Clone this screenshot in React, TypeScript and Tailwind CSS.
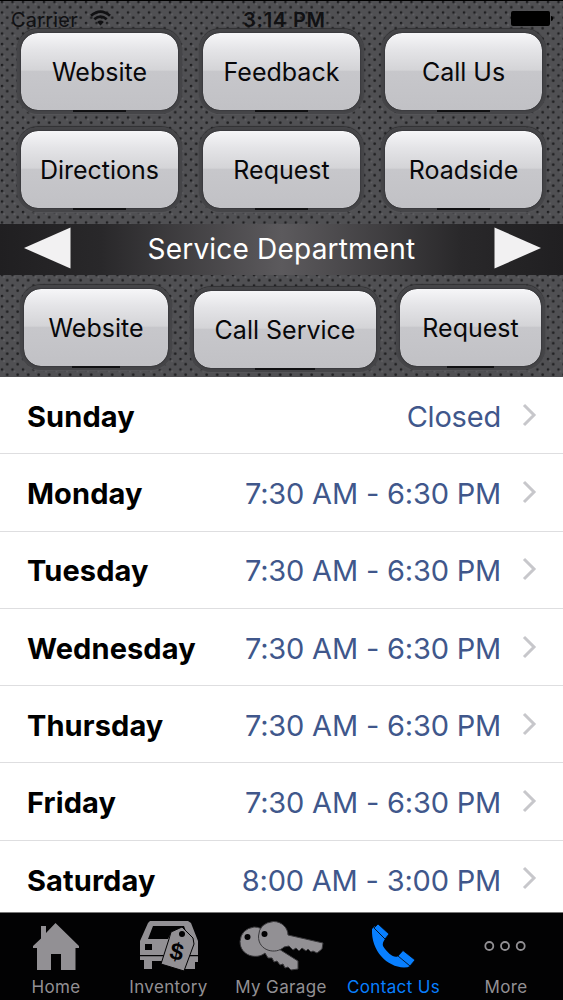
import type { ReactNode } from 'react'
import { clsx } from 'clsx'

type Hours = { day: string; time: string }

const hours: Hours[] = [
  { day: 'Sunday', time: 'Closed' },
  { day: 'Monday', time: '7:30 AM - 6:30 PM' },
  { day: 'Tuesday', time: '7:30 AM - 6:30 PM' },
  { day: 'Wednesday', time: '7:30 AM - 6:30 PM' },
  { day: 'Thursday', time: '7:30 AM - 6:30 PM' },
  { day: 'Friday', time: '7:30 AM - 6:30 PM' },
  { day: 'Saturday', time: '8:00 AM - 3:00 PM' },
]

// Glossy button set into the metal plate
function MetalButton({ label, className }: { label: string; className?: string }) {
  return (
    <button
      className={clsx(
        'relative flex h-[85px] items-center justify-center rounded-[21px] border-4 border-[#454548] bg-[linear-gradient(#f6f6f8_0%,#e4e4e7_22%,#d4d4d7_48%,#c7c7cb_50%,#c1c1c5_100%)] bg-clip-padding pt-0.5 text-[25px] whitespace-nowrap text-[#08080a] shadow-[0_-1px_1px_#303032,0_1px_1px_#565659]',
        className
      )}
    >
      <span className="absolute inset-0 rounded-[17px] shadow-[0_0_2px_#252527]" />
      <span className="absolute -bottom-[2px] left-1/3 h-[2px] w-1/3 bg-[#111113]" />
      <span className="relative">{label}</span>
    </button>
  )
}

function StatusBar() {
  return (
    <div className="relative flex h-[33px] items-start justify-between border-t border-black pt-[7px] pr-2.5 pl-[11px] text-[20px] leading-6 text-[#111113]">
      <div className="flex gap-3">
        <span className="tracking-[0.2px]">Carrier</span>
        <svg width="21" height="16" viewBox="0 0 21 16" className="mt-[2px]" fill="none" stroke="#111113" strokeWidth="2.8">
          <path d="M1 5.8Q10.500-2.500 20 5.800M4.300 9.300Q10.500 4 16.700 9.300" />
          <path d="M7.200 12Q10.500 9.200 13.800 12L10.500 15.500Z" fill="#111113" stroke="none" />
        </svg>
      </div>
      <span className="absolute left-[243px] font-semibold tracking-[0.8px]">3:14 PM</span>
      <div className="mt-[3px] flex items-center gap-px">
        <span className="h-[15px] w-[39px] rounded-[2px] bg-black" />
        <span className="h-[5px] w-[2px] rounded-r bg-black" />
      </div>
    </div>
  )
}

function DepartmentBar() {
  return (
    <div className="mt-3 flex h-[51px] items-center justify-between bg-[linear-gradient(90deg,#201f21_0%,#29282a_18%,#5c5a5d_50%,#29282a_82%,#201f21_100%)] pr-[21px] pl-[23px]">
      <svg width="48" height="42" viewBox="0 0 48 42" className="-mt-1">
        <path d="M1 21 47.500 .500V41.500Z" fill="#f2f1f2" />
      </svg>
      <span className="-mt-0.5 mr-0.5 text-[28px] tracking-[0.2px] text-white">Service Department</span>
      <svg width="48" height="42" viewBox="0 0 48 42" className="-mt-1">
        <path d="M.500 .500 47 21 .500 41.500Z" fill="#f2f1f2" />
      </svg>
    </div>
  )
}

function HoursRow({ day, time }: Hours) {
  return (
    <div className="flex h-[77.300px] shrink-0 items-center border-b border-[#dedee0] pt-[3px] pr-[26px] pl-[27px]">
      <span className="flex-1 text-[29px] font-[650] tracking-[0.1px] text-black">{day}</span>
      <span className="text-[29px] tracking-[-0.200px] text-[#40578b]">{time}</span>
      <svg width="15" height="24" viewBox="0 0 15 24" className="-mt-1 ml-[21px]" fill="none" stroke="#c7c7cb" strokeWidth="3">
        <path d="m2 2 10 10L2 22" />
      </svg>
    </div>
  )
}

function Tab({ label, active, children }: { label: string; active?: boolean; children: ReactNode }) {
  return (
    <div className={clsx('flex w-[112.500px] shrink-0 flex-col items-center', active ? 'text-[#087fff]' : 'text-[#929094]')}>
      <svg width="90" height="60" viewBox="0 0 90 60" className="mt-1">
        {children}
      </svg>
      <span className="-mt-px mr-px text-[17px] leading-[22px] tracking-[0.35px] whitespace-nowrap">{label}</span>
    </div>
  )
}

function TabBar() {
  return (
    <nav className="flex h-[88px] shrink-0 justify-center overflow-hidden border-t border-[#777] bg-[#020203]">
      <Tab label="Home">
        <path fill="currentColor" d="M21 29 29 21.500V9H34V16L43.500 6 67 29V31H63.500V53H49V37H39V53H25V31H21Z" />
      </Tab>
      <Tab label="Inventory">
        <path fill="currentColor" fillRule="evenodd" d="M26 4H64L67 6 74 24V45H71V52H61V44H28V52H20V43H16V24L24 6ZM29 9 24 22 44 22 48 14 63 17 60 9Z" />
        <path fill="#020203" d="M21 27H28V33H21ZM16 38H74V39.300H16Z" />
        <path fill="currentColor" stroke="#020203" d="M47 15 58 10 69 21 70 27 60 54 37 47 45 22Z" />
        <circle cx="58" cy="17" r="3" fill="#020203" />
        <text x="46" y="43" fill="#020203" className="font-['Liberation_Sans',sans-serif] text-[24px] font-bold" transform="rotate(12 53 35)">$</text>
      </Tab>
      <Tab label="My Garage">
        <g fill="currentColor" stroke="#39383b" strokeWidth="1">
          <path d="M17 10C27 10 33 18 34 27L61 44V52L54 53 51 50 48 51 46 47 43 48 40 44 37 45 35 41 31 41 28 36C20 43 3 39 3 24.500Q4 12 17 10Z" />
          <circle cx="10.500" cy="20" r="3" fill="#020203" stroke="none" />
          <path d="M36.500 4.500C45 4.500 51 11 51 18L86 26 85 32 80 36 76 34 74 35 71 32 69 34 65 31 62 34 59 31 56 33 52 29 47 30C39 38 21 34 21.500 19Q22 6 36.500 4.500Z" />
          <circle cx="27.500" cy="17" r="3" fill="#020203" stroke="none" />
        </g>
      </Tab>
      <Tab label="Contact Us" active>
        <path fill="currentColor" d="M26 9 23 12C22 34 38 50 55 50.500Q59 50.500 61 49L50 38C47 43 39 37 34 29Q33 26 36 22L26 12Z" />
        <path fill="currentColor" stroke="#020203" strokeWidth=".8" d="M25 11 29 7 40 17 36 22ZM49 39 54 33.500 66 43 61 49Z" />
      </Tab>
      <Tab label="More">
        <g fill="none" stroke="currentColor" strokeWidth="1.800">
          <circle cx="27.300" cy="29" r="4" />
          <circle cx="43" cy="29" r="4" />
          <circle cx="58.700" cy="29" r="4" />
        </g>
      </Tab>
    </nav>
  )
}

export default function App() {
  return (
    <div className="flex h-[1000px] w-[563px] flex-col overflow-hidden bg-white font-['Inter','Liberation_Sans',sans-serif]">
      <header className="h-[377px] shrink-0 bg-[#505053] bg-[radial-gradient(circle_at_2px_2px,#1e1e20_.800px,transparent_1.700px),radial-gradient(circle_at_7.200px_7.200px,#1e1e20_.800px,transparent_1.700px),radial-gradient(circle_at_4px_4px,#68686b_0px,transparent_1.500px)] bg-size-[10.500px_10.500px]">
        <StatusBar />
        <div className="-mt-1 flex flex-wrap gap-x-[17px] gap-y-[13px] pl-[17px]">
          {['Website', 'Feedback', 'Call Us', 'Directions', 'Request', 'Roadside'].map((label) => (
            <MetalButton key={label} label={label} className="w-[165px]" />
          ))}
        </div>
        <DepartmentBar />
        <div className="mt-2.5 flex gap-[17px] pl-5">
          <MetalButton label="Website" className="w-[152px]" />
          <MetalButton label="Call Service" className="mt-0.5 ml-px w-[190px]" />
          <MetalButton label="Request" className="-ml-px w-[149px]" />
        </div>
      </header>
      <main className="flex min-h-0 flex-1 flex-col overflow-hidden">
        {hours.map((row) => (
          <HoursRow key={row.day} {...row} />
        ))}
      </main>
      <TabBar />
    </div>
  )
}
